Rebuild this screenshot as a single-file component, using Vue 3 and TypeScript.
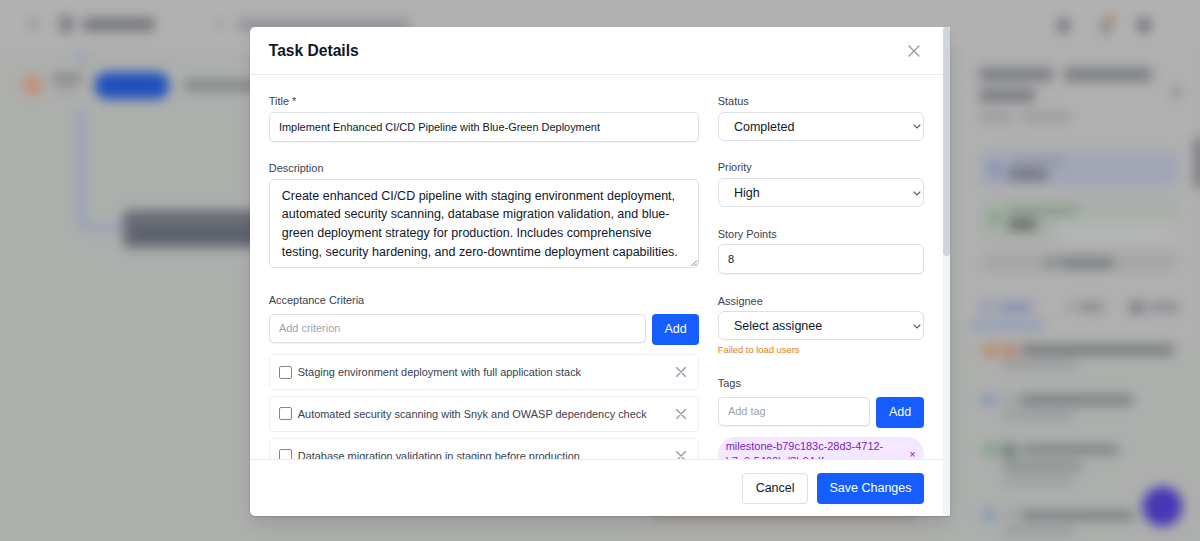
<script setup lang="ts">
import { ref } from 'vue'

interface Criterion {
  text: string
  done: boolean
}

interface Bar {
  x: number
  y: number
  w: number
  h: number
  fill: string
  r?: number
}

const title = ref('Implement Enhanced CI/CD Pipeline with Blue-Green Deployment')
const description = ref(
  'Create enhanced CI/CD pipeline with staging environment deployment, automated security scanning, database migration validation, and blue-green deployment strategy for production. Includes comprehensive testing, security hardening, and zero-downtime deployment capabilities.',
)
const status = ref('Completed')
const priority = ref('High')
const points = ref('8')
const assignee = ref('Select assignee')
const newCriterion = ref('')
const newTag = ref('')
const tags = ref<string[]>(['milestone-b79c183c-28d3-4712-b7a9-5490bd8b04df'])
const criteria = ref<Criterion[]>([
  { text: 'Staging environment deployment with full application stack', done: false },
  { text: 'Automated security scanning with Snyk and OWASP dependency check', done: false },
  { text: 'Database migration validation in staging before production', done: false },
])

// Out-of-focus shapes of the board behind the dialog
const bars: Bar[] = [
  { x: 29, y: 19, w: 10, h: 10, fill: '#909298' },
  { x: 59, y: 15, w: 15, h: 18, fill: '#797b80', r: 7 },
  { x: 83, y: 18, w: 72, h: 13, fill: '#737579' },
  { x: 214, y: 19, w: 9, h: 10, fill: '#9c9ea2' },
  { x: 238, y: 19, w: 172, h: 12, fill: '#8f9198' },
  { x: 73, y: 51, w: 16, h: 14, fill: '#a1a4b4', r: 7 },
  { x: 52, y: 74, w: 30, h: 9, fill: '#828487' },
  { x: 56, y: 87, w: 18, h: 5, fill: '#9a9c9e' },
  { x: 184, y: 80, w: 90, h: 11, fill: '#828488' },
  { x: 1057, y: 18, w: 13, h: 15, fill: '#74767c', r: 6 },
  { x: 1101, y: 20, w: 9, h: 14, fill: '#7d7f86', r: 4 },
  { x: 1107, y: 13, w: 9, h: 9, fill: '#c58460', r: 4 },
  { x: 1137, y: 17, w: 14, h: 16, fill: '#707278', r: 7 },
  { x: 979, y: 68, w: 74, h: 13, fill: '#797c80' },
  { x: 1064, y: 68, w: 88, h: 13, fill: '#797c80' },
  { x: 979, y: 89, w: 56, h: 13, fill: '#797c80' },
  { x: 979, y: 113, w: 34, h: 8, fill: '#949699' },
  { x: 1021, y: 113, w: 50, h: 8, fill: '#949699' },
  { x: 1173, y: 88, w: 7, h: 9, fill: '#75777d' },
  { x: 1194, y: 137, w: 12, h: 51, fill: '#797b80' },
  { x: 979, y: 151, w: 200, h: 36, fill: '#a2a7b4', r: 6 },
  { x: 990, y: 163, w: 11, h: 12, fill: '#7f8ab3' },
  { x: 1009, y: 158, w: 57, h: 7, fill: '#9094a2' },
  { x: 1008, y: 169, w: 40, h: 11, fill: '#70737e' },
  { x: 981, y: 199, w: 198, h: 41, fill: '#a6afa7', r: 6 },
  { x: 989, y: 212, w: 13, h: 12, fill: '#83a085' },
  { x: 1008, y: 207, w: 70, h: 8, fill: '#87968a' },
  { x: 1008, y: 219, w: 29, h: 11, fill: '#686b6b' },
  { x: 1056, y: 219, w: 121, h: 24, fill: '#b3b4b4', r: 10 },
  { x: 981, y: 252, w: 196, h: 20, fill: '#a5a7a5', r: 6 },
  { x: 1045, y: 257, w: 10, h: 11, fill: '#7f8187' },
  { x: 1059, y: 258, w: 55, h: 10, fill: '#787b81' },
  { x: 980, y: 301, w: 12, h: 12, fill: '#8f99b2' },
  { x: 998, y: 302, w: 35, h: 11, fill: '#8691b0' },
  { x: 968, y: 322, w: 77, h: 7, fill: '#8797b9' },
  { x: 1066, y: 302, w: 9, h: 10, fill: '#999b9f' },
  { x: 1079, y: 302, w: 25, h: 10, fill: '#888a8f' },
  { x: 1130, y: 301, w: 13, h: 13, fill: '#75787f' },
  { x: 1148, y: 302, w: 32, h: 10, fill: '#8b8d92' },
  { x: 984, y: 344, w: 13, h: 13, fill: '#bd8357', r: 6 },
  { x: 1002, y: 344, w: 14, h: 13, fill: '#b68265' },
  { x: 1021, y: 345, w: 153, h: 10, fill: '#74767b' },
  { x: 1003, y: 361, w: 74, h: 7, fill: '#949699' },
  { x: 983, y: 394, w: 12, h: 12, fill: '#778cb7', r: 6 },
  { x: 1004, y: 394, w: 10, h: 10, fill: '#9a9c9f' },
  { x: 1020, y: 395, w: 114, h: 10, fill: '#797b80' },
  { x: 1003, y: 411, w: 72, h: 7, fill: '#949699' },
  { x: 983, y: 443, w: 16, h: 13, fill: '#809f83', r: 6 },
  { x: 1002, y: 443, w: 15, h: 15, fill: '#728377' },
  { x: 1022, y: 445, w: 97, h: 9, fill: '#7b7d82' },
  { x: 1002, y: 462, w: 81, h: 8, fill: '#87898c' },
  { x: 1003, y: 477, w: 70, h: 6, fill: '#949699' },
  { x: 983, y: 509, w: 12, h: 12, fill: '#778cb7', r: 6 },
  { x: 1004, y: 509, w: 10, h: 10, fill: '#9a9c9f' },
  { x: 1020, y: 511, w: 114, h: 9, fill: '#797b80' },
  { x: 1003, y: 527, w: 72, h: 7, fill: '#949699' },
]

function addCriterion() {
  const text = newCriterion.value.trim()
  if (text) criteria.value.push({ text, done: false })
  newCriterion.value = ''
}

function addTag() {
  const tag = newTag.value.trim()
  if (tag) tags.value.push(tag)
  newTag.value = ''
}
</script>

<template>
  <main class="screen">
    <svg class="board" viewBox="0 0 1200 541" aria-hidden="true">
      <rect x="-20" y="-20" width="1240" height="581" fill="#adafad" />
      <rect x="-20" y="-20" width="1240" height="68" fill="#b1b1b1" />
      <rect x="964" y="40" width="228" height="298" fill="#b0b0b0" />
      <path d="M81.500 110V221Q81.500 228 89 228H124" fill="none" stroke="#8e9bbd" stroke-width="5.500" />
      <rect v-for="(b, i) in bars" :key="i" :x="b.x" :y="b.y" :width="b.w" :height="b.h" :rx="b.r ?? 4" :fill="b.fill" />
      <circle cx="32.500" cy="85.500" r="9.500" fill="#c28d6e" />
      <rect x="95" y="72" width="74" height="27" rx="12" fill="#1f50bd" />
      <rect x="123" y="210" width="160" height="38" rx="6" fill="#686c76" />
      <rect x="134" y="229" width="150" height="10" fill="#585c66" />
      <rect x="653" y="512" width="262" height="7" fill="#9c8d84" />
      <circle cx="1162.500" cy="506.500" r="20" fill="#4836b5" />
    </svg>

    <section class="dialog" role="dialog" aria-labelledby="dialog-title">
      <div class="pane">
        <header class="head">
          <h2 id="dialog-title">Task Details</h2>
          <button class="icon-btn" aria-label="Close">
            <svg width="12" height="12" viewBox="0 0 12 12"><path d="M1 1L11 11M11 1L1 11" /></svg>
          </button>
        </header>

        <div class="body">
          <div class="col">
            <div class="field title-field">
              <label for="f-title">Title *</label>
              <input id="f-title" v-model="title" class="control" />
            </div>
            <div class="field description-field">
              <label for="f-desc">Description</label>
              <div class="area-wrap">
                <textarea id="f-desc" v-model="description"></textarea>
                <svg class="grip" width="7" height="7" viewBox="0 0 7 7"><path d="M.5 6L6 .5M3.500 6L6 3.500" /></svg>
              </div>
            </div>
            <div class="field list-field">
              <label for="f-crit">Acceptance Criteria</label>
              <div class="add-row">
                <input id="f-crit" v-model="newCriterion" class="control" placeholder="Add criterion" />
                <button class="primary add" @click="addCriterion">Add</button>
              </div>
              <ul class="criteria">
                <li v-for="(c, i) in criteria" :key="c.text">
                  <input v-model="c.done" type="checkbox" :aria-label="c.text" />
                  <span>{{ c.text }}</span>
                  <button class="icon-btn" aria-label="Remove criterion" @click="criteria.splice(i, 1)">
                    <svg width="10" height="10" viewBox="0 0 10 10"><path d="M.5 .5L9.500 9.500M9.500 .5L.5 9.500" /></svg>
                  </button>
                </li>
              </ul>
            </div>
          </div>

          <div class="col side-col">
            <div class="field select-field">
              <label for="f-status">Status</label>
              <div class="select-wrap">
                <select id="f-status" v-model="status"><option>Completed</option></select>
                <svg width="8" height="5" viewBox="0 0 8 5"><path d="M.7 .7L4 4L7.300 .7" /></svg>
              </div>
            </div>
            <div class="field select-field">
              <label for="f-priority">Priority</label>
              <div class="select-wrap">
                <select id="f-priority" v-model="priority"><option>High</option></select>
                <svg width="8" height="5" viewBox="0 0 8 5"><path d="M.7 .7L4 4L7.300 .7" /></svg>
              </div>
            </div>
            <div class="field points-field">
              <label for="f-points">Story Points</label>
              <input id="f-points" v-model="points" class="control" />
            </div>
            <div class="field assignee-field">
              <label for="f-assignee">Assignee</label>
              <div class="select-wrap">
                <select id="f-assignee" v-model="assignee"><option>Select assignee</option></select>
                <svg width="8" height="5" viewBox="0 0 8 5"><path d="M.7 .7L4 4L7.300 .7" /></svg>
              </div>
              <p class="warning">Failed to load users</p>
            </div>
            <div class="field list-field">
              <label for="f-tag">Tags</label>
              <div class="add-row">
                <input id="f-tag" v-model="newTag" class="control" placeholder="Add tag" />
                <button class="primary add" @click="addTag">Add</button>
              </div>
              <div class="tags">
                <span v-for="(t, i) in tags" :key="t" class="tag">
                  <span class="tag-text">{{ t }}</span>
                  <button aria-label="Remove tag" @click="tags.splice(i, 1)">×</button>
                </span>
              </div>
            </div>
          </div>
        </div>

        <footer class="foot">
          <button class="secondary">Cancel</button>
          <button class="primary">Save Changes</button>
        </footer>
      </div>
      <div class="scrollbar"><div class="thumb"></div></div>
    </section>
  </main>
</template>

<style>
body {
  margin: 0;
}
</style>

<style scoped>
* {
  box-sizing: border-box;
}
.screen {
  display: grid;
  width: 1200px;
  height: 541px;
  overflow: hidden;
  background: #aeb0ae;
  font-family: "Liberation Sans", Arial, sans-serif;
  color: #0f172a;
}
.board,
.dialog {
  grid-area: 1 / 1;
}
.board {
  width: 1200px;
  height: 541px;
  overflow: visible;
  filter: blur(5.6px);
}
.dialog {
  z-index: 1;
  display: flex;
  width: 700px;
  height: 489.3px;
  margin: 27px 0 0 250px;
  overflow: hidden;
  border-radius: 5px 2px 2px 5px;
  background: #fff;
  box-shadow: 0 10px 18px -3px rgba(0, 0, 0, 0.12), 0 1px 2px rgba(0, 0, 0, 0.14);
}
.pane {
  display: flex;
  flex-direction: column;
  width: 692.5px;
}
.scrollbar {
  width: 7.5px;
  background: #f3f4f8;
}
.thumb {
  height: 229px;
  border-radius: 4px;
  background: #d0d4de;
}
.head {
  display: flex;
  flex: none;
  align-items: center;
  justify-content: space-between;
  height: 48px;
  padding: 0 22.5px 0 18.75px;
  border-bottom: 1px solid #eaebef;
}
h2 {
  margin: 0;
  font-size: 15.625px;
  line-height: 22px;
}
button {
  padding: 0;
  border: 0;
  background: none;
  font: inherit;
  color: inherit;
}
.icon-btn {
  display: flex;
}
.icon-btn path {
  fill: none;
  stroke: #8b93a5;
  stroke-width: 1.2;
  stroke-linecap: round;
}
.body {
  display: grid;
  flex: none;
  grid-template-columns: 430.5px 206px;
  gap: 18.5px;
  height: 384px;
  padding: 18.75px 18.75px 0;
  overflow: hidden;
}
label {
  display: block;
  height: 18px;
  font-size: 10.94px;
  line-height: 15.6px;
  color: #374151;
}
.control {
  display: block;
  width: 100%;
  height: 30px;
  padding: 0 9.2px;
  border: 1px solid #dcdfe6;
  border-radius: 5px;
  background: #fff;
  box-shadow: 0 1px 1px rgba(0, 0, 0, 0.06);
  font: 10.94px "Liberation Sans", Arial, sans-serif;
  color: #0f172a;
  outline: none;
}
.control::placeholder {
  color: #9ca3af;
  opacity: 1;
}
.title-field {
  height: 67px;
}
.description-field {
  height: 131.5px;
}
.list-field label {
  height: 21.3px;
  padding-top: 0.3px;
}
.area-wrap {
  position: relative;
  height: 89px;
}
textarea {
  display: block;
  width: 100%;
  height: 100%;
  padding: 6.8px 12px 0;
  overflow: hidden;
  border: 1px solid #dcdfe6;
  border-radius: 5px;
  background: #fff;
  font: 12.5px/18.75px "Liberation Sans", Arial, sans-serif;
  color: #0f172a;
  resize: none;
  outline: none;
}
.grip {
  position: absolute;
  right: 1px;
  bottom: 1px;
}
.grip path {
  fill: none;
  stroke: #555b66;
  stroke-width: 0.8;
}
.add-row {
  display: flex;
  gap: 6.25px;
  height: 31.25px;
}
.add-row .control {
  flex: 1;
  height: 29.5px;
  min-width: 0;
}
.primary {
  border-radius: 4px;
  background: #155dfc;
  font-size: 12.5px;
  color: #fff;
}
.add {
  width: 47.5px;
  height: 31.25px;
  flex: none;
}
.criteria {
  display: grid;
  gap: 6.25px;
  margin: 9.4px 0 0;
  padding: 0;
  list-style: none;
}
.criteria li {
  display: flex;
  align-items: center;
  height: 35.7px;
  padding: 0 12px 0 9px;
  border: 1px solid #eceef1;
  border-radius: 5px;
  font-size: 10.94px;
  color: #374151;
}
.criteria input {
  flex: none;
  width: 13px;
  height: 13px;
  margin: 0 6px 0 0;
  appearance: none;
  border: 1px solid #858585;
  border-radius: 2px;
  background: #fff;
}
.criteria span {
  flex: 1;
}
.select-field {
  height: 66.3px;
}
.side-col .select-field + .select-field label,
.points-field label,
.assignee-field label {
  padding-top: 0.4px;
}
.points-field {
  height: 66.9px;
}
.assignee-field {
  height: 82px;
}
.select-wrap {
  position: relative;
  height: 29px;
}
select {
  width: 100%;
  height: 29px;
  padding: 1px 15.2px 0;
  appearance: none;
  border: 1px solid #dcdfe6;
  border-radius: 6px;
  background: #fff;
  font: 12.5px "Liberation Sans", Arial, sans-serif;
  color: #0f172a;
}
.select-wrap svg {
  position: absolute;
  top: 12.5px;
  right: 3px;
}
.select-wrap path {
  fill: none;
  stroke: #4b515d;
  stroke-width: 1.1;
}
.warning {
  margin: 4px 0 0;
  font-size: 9.375px;
  line-height: 12.5px;
  color: #e88020;
}
.tags {
  margin-top: 9.4px;
}
.tag {
  display: flex;
  align-items: center;
  justify-content: space-between;
  width: 206px;
  height: 34.5px;
  padding: 0 8px;
  border-radius: 17px;
  background: #f3e8ff;
  font-size: 10.94px;
  line-height: 15.6px;
  color: #7e22b8;
}
.tag-text {
  width: 172px;
}
.tag button {
  font-size: 10.94px;
}
.foot {
  display: flex;
  flex: 1;
  align-items: center;
  justify-content: flex-end;
  gap: 9.4px;
  padding: 0 18.75px;
  border-top: 1px solid #eaebef;
}
.foot button {
  height: 31.25px;
  font-size: 12.5px;
}
.secondary {
  width: 65.5px;
  border: 1px solid #dcdfe5;
  border-radius: 4px;
  background: #fff;
}
.foot .primary {
  width: 106.5px;
}
</style>
